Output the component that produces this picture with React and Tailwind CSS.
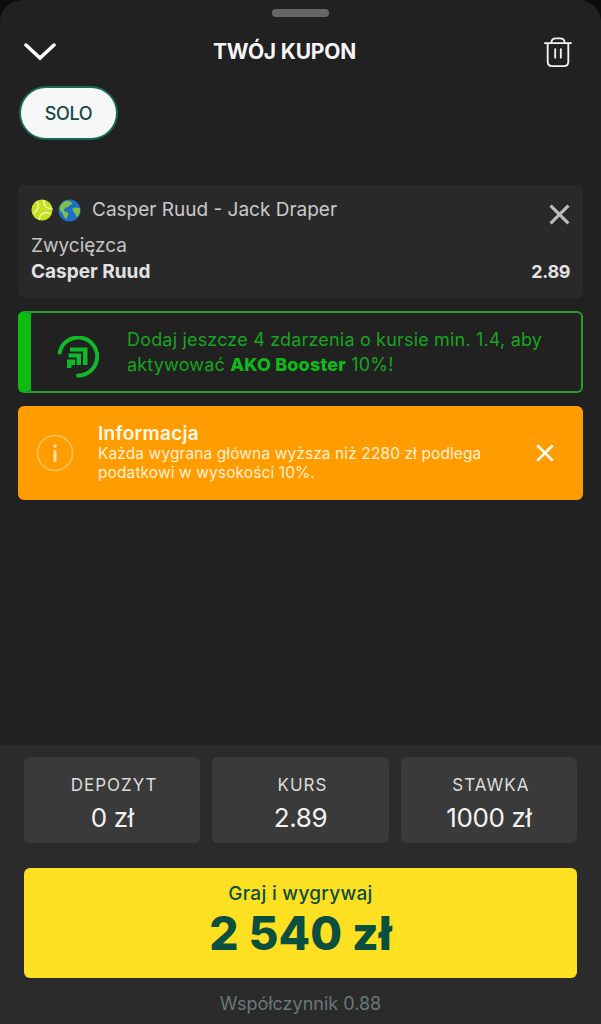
import React from "react";

const font = { fontFamily: "Inter, 'Noto Sans', sans-serif" };

function Tennis() {
  return (
    <svg width="22" height="22" viewBox="0 0 24 24">
      <circle cx="12" cy="12" r="11.5" fill="#c5e01f" />
      <path d="M6 2.500C9.500 7 9 11.500 3 16M14 1c-1 6 3 10 9.500 9.500M9 23c0-6 5-10 12-7" fill="none" stroke="#eef5b0" strokeWidth="1.600" />
    </svg>
  );
}

function Globe() {
  return (
    <svg width="23" height="23" viewBox="0 0 24 24">
      <circle cx="12" cy="12" r="11.5" fill="#1c6fc4" />
      <path d="M9 1.500c3 .5 5 1.500 6 3-1 2-3 1.500-4 3.500-1.500 1-3.500.5-4.500 2.500-1 1.500.5 3 2 3 2 0 2.500 1.500 2 3.500-.5 2-1.500 3-2 4-2-2-3-4-3.500-6C3.500 13 1.500 12 1.500 9 3 5 6 2.500 9 1.500z" fill="#7fc04a" />
      <path d="M15 10c2-1.500 5-1.500 8 0 .5 3-.5 6-2.500 8.500-1.500 0-2-2-2.500-3.500-1.500-1-3-3-3-5z" fill="#7fc04a" />
    </svg>
  );
}

function BoosterIcon() {
  return (
    <svg width="42" height="42" viewBox="0 0 42 42" fill="none" stroke="#10b82a">
      <path d="M2.600 16.500A19 19 0 1 1 21 39.500" strokeWidth="4" strokeLinecap="round" />
      <path d="M13 11.500h17.500v17.500h-4.500V15.500H13z" fill="#10b82a" stroke="none" />
      <path d="M11.500 17.500h12.500v11.500h-4.500V21.500h-8z" fill="#10b82a" stroke="none" />
      <path d="M10 23.500h8v5.500h-3.500v3h-4.500z" fill="#10b82a" stroke="none" />
    </svg>
  );
}

function InfoIcon() {
  return (
    <svg width="38" height="38" viewBox="0 0 38 38" fill="none" stroke="#ffc25f">
      <circle cx="19" cy="19" r="17.500" strokeWidth="1.500" />
      <path d="M19 17.500v9" stroke="#ffe2b0" strokeWidth="3" strokeLinecap="round" />
      <circle cx="19" cy="12" r="1.800" fill="#ffe2b0" stroke="none" />
    </svg>
  );
}

function Cross({ size, color, width }) {
  return (
    <svg width={size} height={size} viewBox="0 0 20 20" fill="none" stroke={color} strokeWidth={width}>
      <path d="M1.500 1.500l17 17M18.500 1.500l-17 17" />
    </svg>
  );
}

function StatBox({ label, value }) {
  return (
    <div className="flex h-[86px] flex-col items-center rounded-md bg-[#3a3a3a] pt-[17px]">
      <div className="pl-[4px] text-[17px] leading-[22px] tracking-[1px] text-[#dcdcdc]">{label}</div>
      <div className="mt-[6px] text-[26px] leading-[32px] tracking-[-0.4px] text-[#f2f2f2]">{value}</div>
    </div>
  );
}

export default function App() {
  return (
    <div className="h-[1024px] w-[601px] overflow-hidden bg-[#0c0c0c]" style={font}>
      <div className="flex h-full flex-col overflow-hidden rounded-t-[22px] bg-[#212121]">
        <div className="flex justify-center pt-[9px]">
          <div className="h-2 w-[57px] rounded-full bg-[#666666]" />
        </div>

        {/* header */}
        <div className="mt-[13px] flex h-[44px] items-center justify-between pl-[24px] pr-[28px]">
          <svg width="32" height="20" viewBox="0 0 32 20" fill="none" stroke="#ffffff" strokeWidth="3.500" strokeLinecap="round">
            <path d="M2 3l14 13L30 3" />
          </svg>
          <div className="pr-[30px] text-[21px] font-bold tracking-[-0.2px] text-[#f5f5f5]">TWÓJ KUPON</div>
          <svg width="30" height="30" viewBox="0 0 30 32" fill="none" stroke="#f2f2f2" strokeWidth="2" strokeLinecap="round">
            <path d="M1 6.500h28M8 6C8 3 10 1.500 13 1.500h4c3 0 5 1.500 5 4.500" />
            <path d="M4 7v19c0 3 2 5 5 5h12c3 0 5-2 5-5V7" />
            <path d="M12 13v9M18 13v9" />
          </svg>
        </div>

        <div className="pl-[19px] pt-[12px]">
          <div className="flex h-[54px] w-[99px] items-center justify-center rounded-[27px] border-2 border-[#17695a] bg-[#f5f8f7] text-[18px] font-medium tracking-[-0.3px] text-[#14493f]">
            SOLO
          </div>
        </div>

        {/* selected bet */}
        <div className="mx-[18px] mt-[45px] h-[113px] rounded-md bg-[#292929] pl-[13px] pr-[13px] pt-[12px]">
          <div className="flex items-start justify-between">
            <div className="flex items-center">
              <Tennis />
              <span className="ml-[5px]"><Globe /></span>
              <span className="ml-[11px] text-[19px] leading-[26px] text-[#c9c9c9]">Casper Ruud - Jack Draper</span>
            </div>
            <div className="mt-[7px]"><Cross size={21} color="#b7bfbd" width={3} /></div>
          </div>
          <div className="mt-[9px] text-[19px] leading-[24px] text-[#c4c4c4]">Zwycięzca</div>
          <div className="mt-[2px] flex items-center justify-between text-[19px] font-bold leading-[24px] text-[#e2e2e2]">
            <span>Casper Ruud</span>
            <span className="text-[18px] tracking-[-0.4px]">2.89</span>
          </div>
        </div>

        {/* booster */}
        <div className="mx-[18px] mt-[13px] flex h-[82px] items-center rounded-md border-2 border-l-[13px] border-[#2b9a2f] border-l-[#0dbb12] pl-[26px]">
          <div className="mt-[10px]"><BoosterIcon /></div>
          <div className="ml-[28px] text-[18px] leading-[25px] tracking-[0.18px] text-[#17a51f]">
            Dodaj jeszcze 4 zdarzenia o kursie min. 1.4, aby
            <br />
            aktywować <b className="font-extrabold text-[#10b81a]">AKO Booster</b> 10%!
          </div>
        </div>

        {/* tax notice */}
        <div className="mx-[18px] mt-[13px] flex h-[94px] items-center rounded-md bg-[#ff9c00] pl-[18px]">
          <InfoIcon />
          <div className="ml-[24px] w-[439px] text-[#fff0d8]">
            <div className="text-[19px] font-semibold leading-[20px] tracking-[0.3px] text-[#fff8ec]">Informacja</div>
            <div className="text-[15.500px] leading-[19px] tracking-[0.1px]">
              Każda wygrana główna wyższa niż 2280 zł podlega
              <br />
              podatkowi w wysokości 10%.
            </div>
          </div>
          <div className="ml-[-1px]"><Cross size={18} color="#ffffff" width={3} /></div>
        </div>

        <div className="flex-1" />

        {/* bottom panel */}
        <div className="h-[279px] bg-[#2b2b2b] px-[24px] pt-[12px]">
          <div className="grid grid-cols-3 gap-[12px]">
            <StatBox label="DEPOZYT" value="0 zł" />
            <StatBox label="KURS" value="2.89" />
            <StatBox label="STAWKA" value="1000 zł" />
          </div>
          <div className="mt-[25px] flex h-[110px] flex-col items-center rounded-md bg-[#fee022] pt-[14px] text-[#0b4f3e]">
            <div className="text-[19px] font-medium leading-[24px] tracking-[0.3px]">Graj i wygrywaj</div>
            <div className="text-[46px] font-extrabold leading-[54px]">2 540 zł</div>
          </div>
          <div className="mt-[14px] text-center text-[18px] leading-[24px] text-[#697878]">Współczynnik 0.88</div>
        </div>
      </div>
    </div>
  );
}
